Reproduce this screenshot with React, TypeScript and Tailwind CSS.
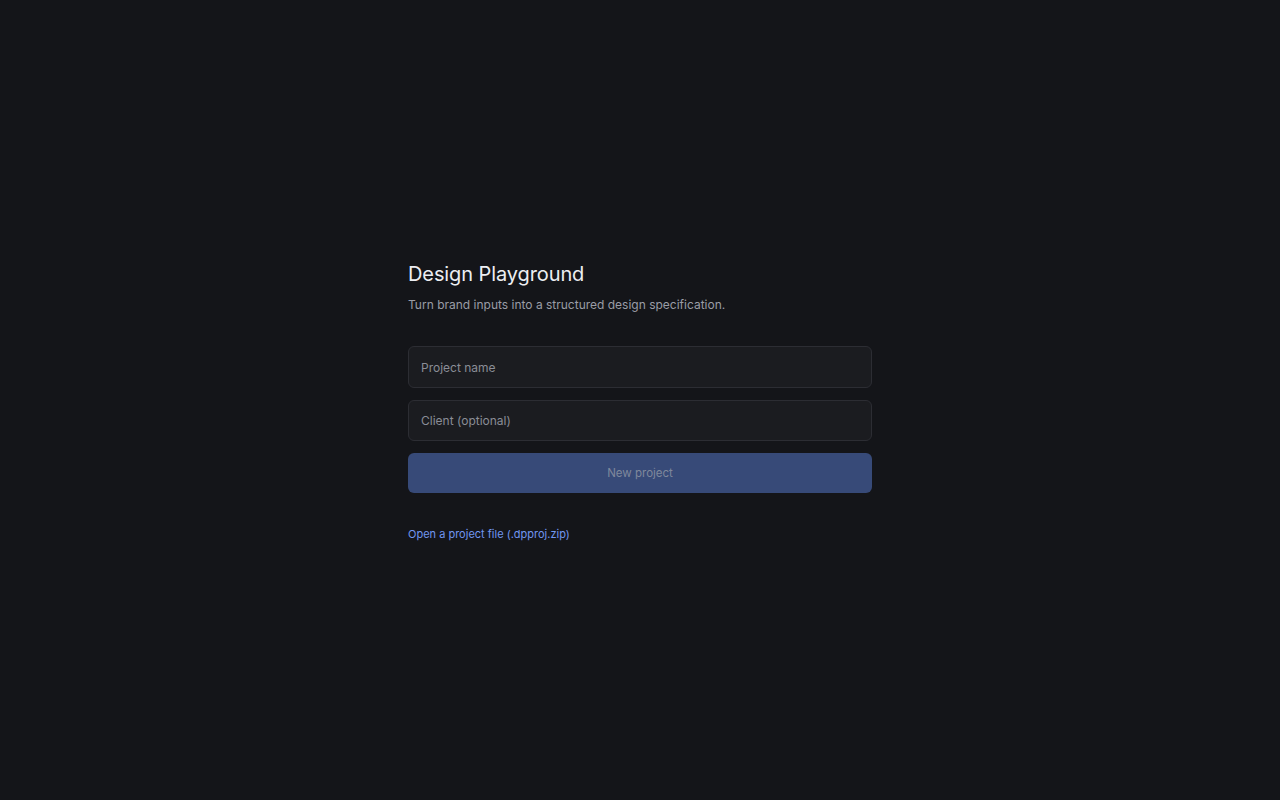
import React from "react";

export default function App() {
  return (
    <div
      className="min-h-screen w-full bg-[#141519] flex justify-center pt-[260px]"
      style={{ fontFamily: "Inter, 'Noto Sans', sans-serif" }}
    >
      <div className="w-[464px] flex flex-col">
        <h1 className="text-[20px] leading-[28px] text-[#eceef2] font-normal tracking-[-0.005em]">
          Design Playground
        </h1>
        <p className="mt-[8px] text-[12px] leading-[18px] text-[#9a9da6]">
          Turn brand inputs into a structured design specification.
        </p>
        <div className="mt-[32px] flex flex-col gap-[12px]">
          <input
            placeholder="Project name"
            className="h-[42px] w-full rounded-[6px] border border-[#2c2d33] bg-[#1b1c20] px-[12px] text-[12px] text-[#e5e7eb] placeholder:text-[#8a8d96] outline-none"
          />
          <input
            placeholder="Client (optional)"
            className="h-[41px] w-full rounded-[6px] border border-[#2c2d33] bg-[#1b1c20] px-[12px] text-[12px] text-[#e5e7eb] placeholder:text-[#8a8d96] outline-none"
          />
          <button
            disabled
            className="h-[40px] w-full rounded-[6px] bg-[#374a78] pt-[1px] text-[11.5px] text-[#7f889c]"
          >
            New project
          </button>
        </div>
        <a className="mt-[33px] text-[11px] leading-[16px] text-[#7196f0] cursor-pointer">
          Open a project file (.dpproj.zip)
        </a>
      </div>
    </div>
  );
}
